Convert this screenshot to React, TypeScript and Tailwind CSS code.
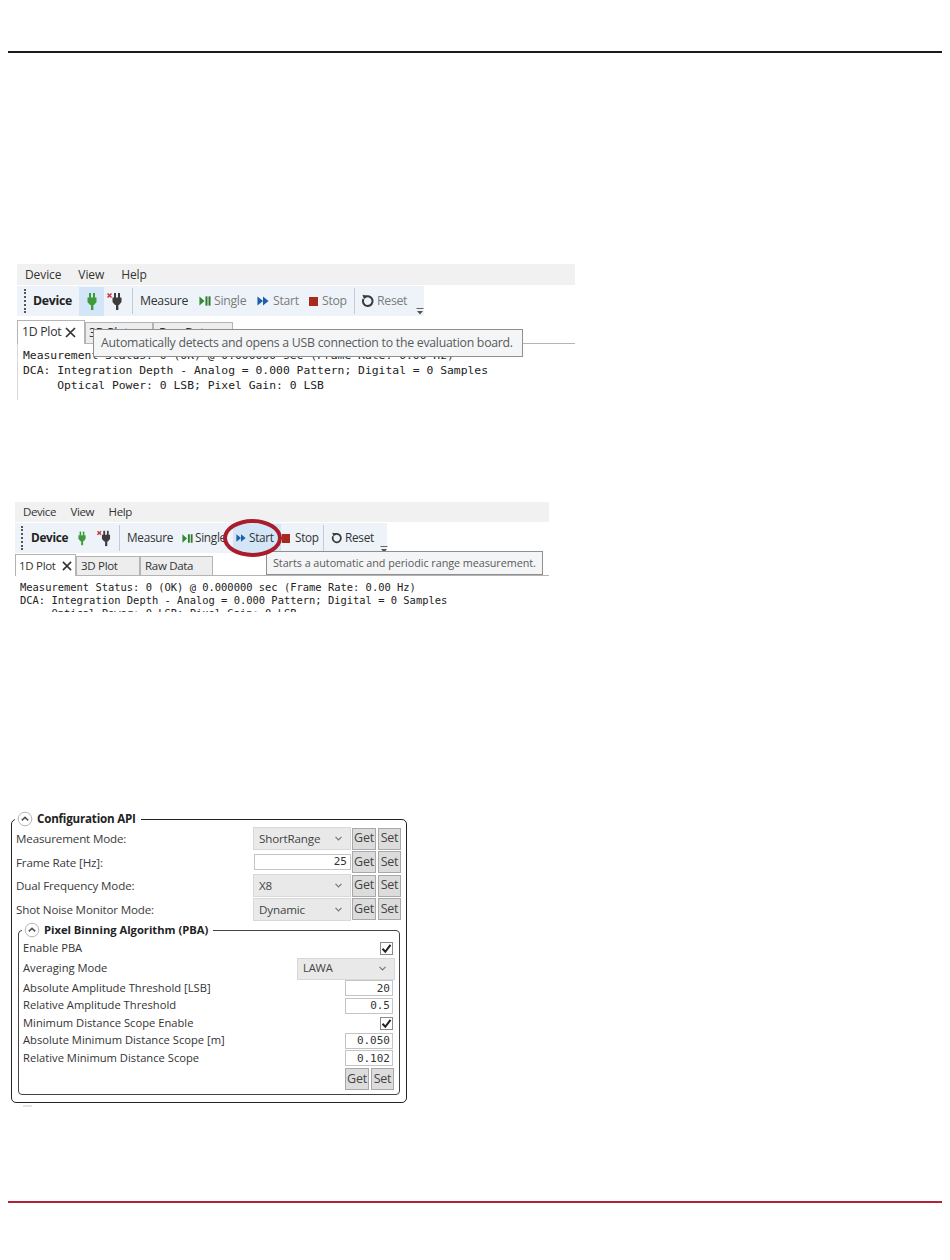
import React from "react";

const ui = "font-['Open_Sans','Noto_Sans',sans-serif]";
const mono = "font-['DejaVu_Sans_Mono',monospace]";

function Plug({ x = false, size = 20 }: { x?: boolean; size?: number }) {
  const c = x ? "#3c3c3c" : "#3f9a3c";
  return (
    <svg width={size} height={size} viewBox="0 0 20 20" className="shrink-0">
      <rect x="7" y="2" width="2" height="5" fill={c} />
      <rect x="11" y="2" width="2" height="5" fill={c} />
      <path d="M5.5 6.5h9v4.5l-2.5 3h-4l-2.5-3z" fill={c} />
      <rect x="9" y="13" width="2.4" height="6" fill={c} />
      {x && <path d="M0.5 2.5l4 4M4.5 2.5l-4 4" stroke="#c8323c" strokeWidth="1.5" />}
    </svg>
  );
}
function PlayBar({ size = 12 }: { size?: number }) {
  return (
    <svg width={size} height={size} viewBox="0 0 13 13" className="shrink-0">
      <path d="M0.5 1.5l5.5 5-5.5 5z" fill="#2e8b2e" />
      <rect x="7" y="1.5" width="2.2" height="10" fill="#2e7d2e" />
      <rect x="10.3" y="1.5" width="2.2" height="10" fill="#2e7d2e" />
    </svg>
  );
}
function Dbl({ size = 12 }: { size?: number }) {
  return (
    <svg width={size} height={size} viewBox="0 0 13 13" className="shrink-0">
      <path d="M0.5 1.5l6 5-6 5z" fill="#1f5fa8" />
      <path d="M6.5 1.5l6 5-6 5z" fill="#1f5fa8" />
    </svg>
  );
}
function Reset({ size = 14 }: { size?: number }) {
  return (
    <svg width={size} height={size} viewBox="0 0 15 15" className="shrink-0">
      <path d="M4 3.6a5.2 5.2 0 1 1-1.4 1.7" fill="none" stroke="#3a3a3a" strokeWidth="2.2" />
      <path d="M1.6 0.8l5 1.2-3.4 3.6z" fill="#3a3a3a" />
    </svg>
  );
}
function Overflow() {
  return (
    <svg width="8" height="7" viewBox="0 0 8 7" className="shrink-0">
      <rect x="0.5" y="0" width="7" height="1" fill="#666" />
      <path d="M1 3h6l-3 3.5z" fill="#555" />
    </svg>
  );
}
function Grip() {
  return <div className="w-[2px] h-[24px] shrink-0 border-l-2 border-dotted border-[#555]" />;
}
function Chev() {
  return (
    <svg width="16" height="16" viewBox="0 0 16 16" className="shrink-0">
      <circle cx="8" cy="8" r="6.8" fill="#fff" stroke="#b5b5b5" strokeWidth="1" />
      <path d="M4.8 9.4L8 6.4l3.2 3" fill="none" stroke="#555" strokeWidth="1.6" />
    </svg>
  );
}
function Check() {
  return (
    <div className="w-[13px] h-[13px] border border-[#8a8a8a] bg-white flex items-center justify-center">
      <svg width="11" height="11" viewBox="0 0 11 11">
        <path d="M1.5 5.8l2.8 3L9.5 1.8" fill="none" stroke="#222" strokeWidth="2" />
      </svg>
    </div>
  );
}
function Select({ label, w, h }: { label: string; w: string; h: string }) {
  return (
    <div className={`${w} ${h} flex items-center justify-between pl-[5px] pr-[8px] bg-[#e9e9e9] border border-[#d8d8d8] text-[#444] tracking-[-0.15px]`}>
      <span>{label}</span>
      <svg width="7" height="5" viewBox="0 0 7 5">
        <path d="M0.5 0.8l3 3 3-3" fill="none" stroke="#777" strokeWidth="1.2" />
      </svg>
    </div>
  );
}
function Btn({ label, w = "w-[24px]" }: { label: string; w?: string }) {
  return (
    <div className={`${w} h-[22px] flex items-center justify-center bg-[#dcdcdc] border border-[#a8a8a8] text-[#444] text-[12.5px] tracking-[-0.2px]`}>
      {label}
    </div>
  );
}
function Num({ v }: { v: string }) {
  return (
    <div className={`w-[48px] h-[16px] flex items-center justify-end pr-[2px] bg-white border border-[#c4c4c4] text-[#333] text-[11px] leading-none ${mono}`}>
      {v}
    </div>
  );
}
function OuterRow({ label, children }: { label: string; children: React.ReactNode }) {
  return (
    <div className="h-[23.5px] flex items-center justify-between pl-[3px] pr-[4px]">
      <span className="text-[#3a3a3a] tracking-[-0.15px]">{label}</span>
      <div className="flex items-center gap-[2px]">{children}</div>
    </div>
  );
}
function InnerRow({ label, children, h = "h-[17.5px]" }: { label: string; children: React.ReactNode; h?: string }) {
  return (
    <div className={`${h} flex items-center justify-between pl-[4px] pr-[6px]`}>
      <span className="text-[#333]">{label}</span>
      {children}
    </div>
  );
}

function Txt({ w, grey, children }: { w: string; grey?: boolean; children: React.ReactNode }) {
  return (
    <span className={`block ${w} shrink-0 whitespace-nowrap ${grey ? "text-[#7c7c7c]" : "text-[#333]"}`}>{children}</span>
  );
}

export default function App() {
  return (
    <div className={`w-[950px] h-[1260px] bg-white overflow-hidden flex flex-col ${ui}`}>
      <div className="mt-[51px] mx-[8px] h-[2px] bg-[#1a1a1a] shrink-0" />

      {/* first capture */}
      <div className="relative mt-[211px] ml-[17px] w-[558px] h-[136px] shrink-0 text-[12.3px] tracking-[-0.3px] text-[#333]">
        <div className="h-[21px] bg-[#f1f1f1] flex items-center gap-[17px] pl-[8px] text-[12px] tracking-[-0.1px]">
          <span>Device</span><span>View</span><span>Help</span>
        </div>
        <div className="mt-[1px] w-[407px] h-[30px] bg-[#eef3fa] flex items-center">
          <div className="ml-[7px]"><Grip /></div>
          <span className="ml-[7px] w-[39px] shrink-0 font-bold text-[#222]">Device</span>
          <div className="ml-[7px] w-[25px] h-[29px] shrink-0 bg-[#d3e6f7] flex items-center justify-center"><Plug /></div>
          <div className="ml-[3px]"><Plug x /></div>
          <div className="ml-[5px] w-px h-[26px] shrink-0 bg-[#c4cbd2]" />
          <div className="ml-[7px]"><Txt w="w-[47px]">Measure</Txt></div>
          <div className="ml-[12px]"><PlayBar /></div>
          <div className="ml-[3px]"><Txt w="w-[33px]" grey>Single</Txt></div>
          <div className="ml-[10px]"><Dbl /></div>
          <div className="ml-[4px]"><Txt w="w-[25px]" grey>Start</Txt></div>
          <div className="ml-[11px] w-[9px] h-[9px] shrink-0 bg-[#a82a1e]" />
          <div className="ml-[4px]"><Txt w="w-[25px]" grey>Stop</Txt></div>
          <div className="ml-[7px] w-px h-[26px] shrink-0 bg-[#c4cbd2]" />
          <div className="ml-[6px]"><Reset /></div>
          <div className="ml-[2px]"><Txt w="w-[30px]" grey>Reset</Txt></div>
          <div className="ml-[9px] self-end mb-[1px]"><Overflow /></div>
        </div>
        <div className="mt-[4px] h-[24px] flex items-end border-b border-[#b4b4b4]">
          <div className="w-[68px] h-[24px] -mb-px bg-white border border-[#b4b4b4] border-b-0 flex items-center pl-[4px] gap-[4px] z-10">
            <span>1D Plot</span>
            <svg width="11" height="11" viewBox="0 0 11 11"><path d="M1 1l9 9M10 1l-9 9" stroke="#333" strokeWidth="1.7" /></svg>
          </div>
          <div className="w-[68px] h-[21px] bg-[#ededed] border border-[#b4b4b4] border-b-0 pl-[3px] flex items-center">3D Plot</div>
          <div className="w-[80px] h-[21px] bg-[#ededed] border border-[#b4b4b4] border-b-0 pl-[5px] flex items-center">Raw Data</div>
        </div>
        <div className={`h-[56px] border-l border-[#d8d8d8] pl-[5px] pt-[4px] text-[11.37px] tracking-normal leading-[15px] text-[#222] whitespace-pre ${mono}`}>
          <div>Measurement Status: 0 (OK) @ 0.000000 sec (Frame Rate: 0.00 Hz)</div>
          <div>DCA: Integration Depth - Analog = 0.000 Pattern; Digital = 0 Samples</div>
          <div>     Optical Power: 0 LSB; Pixel Gain: 0 LSB</div>
        </div>
        <div className="absolute left-[76px] top-[65px] w-[430px] h-[28px] bg-[#f4f5f6] border border-[#8f8f8f] flex items-center pl-[7px] text-[12.3px] tracking-[-0.26px] text-[#5a5a5a] whitespace-nowrap">
          Automatically detects and opens a USB connection to the evaluation board.
        </div>
      </div>

      {/* second capture */}
      <div className="relative mt-[102px] ml-[15px] w-[534px] h-[110px] shrink-0 text-[11.8px] tracking-[-0.3px] text-[#333]">
        <div className="h-[20px] bg-[#f1f1f1] flex items-center gap-[14.5px] pl-[8px] text-[11.5px] tracking-[-0.4px]">
          <span>Device</span><span>View</span><span>Help</span>
        </div>
        <div className="mt-[1px] w-[372px] h-[30px] bg-[#eef3fa] flex items-center">
          <div className="ml-[6px]"><Grip /></div>
          <span className="ml-[8px] w-[35px] shrink-0 font-bold text-[#222]">Device</span>
          <div className="ml-[8px]"><Plug size={16} /></div>
          <div className="ml-[7px]"><Plug x size={18} /></div>
          <div className="ml-[4px] w-px h-[26px] shrink-0 bg-[#c4cbd2]" />
          <div className="ml-[7px]"><Txt w="w-[43px]">Measure</Txt></div>
          <div className="ml-[12px]"><PlayBar size={11} /></div>
          <div className="ml-[2px]"><Txt w="w-[28px]">Single</Txt></div>
          <div className="ml-[10px] w-[48px] h-[29px] shrink-0 bg-[#d3e6f7] flex items-center pl-[3px]">
            <Dbl size={10} />
            <div className="ml-[3px]"><Txt w="w-[23px]">Start</Txt></div>
          </div>
          <div className="ml-[1px] w-[8px] h-[9px] shrink-0 bg-[#a82a1e]" />
          <div className="ml-[5px]"><Txt w="w-[23px]">Stop</Txt></div>
          <div className="ml-[5px] w-px h-[26px] shrink-0 bg-[#c4cbd2]" />
          <div className="ml-[7px]"><Reset size={12} /></div>
          <div className="ml-[2px]"><Txt w="w-[27px]">Reset</Txt></div>
          <div className="ml-[8px] self-end"><Overflow /></div>
        </div>
        <div className="h-[23px] flex items-end border-b border-[#b4b4b4] text-[11.5px]">
          <div className="w-[61px] h-[22px] -mb-px bg-white border border-[#b4b4b4] border-b-0 flex items-center pl-[3px] gap-[6px] z-10">
            <span>1D Plot</span>
            <svg width="10" height="10" viewBox="0 0 11 11"><path d="M1 1l9 9M10 1l-9 9" stroke="#333" strokeWidth="1.7" /></svg>
          </div>
          <div className="w-[64px] h-[19px] bg-[#ededed] border border-[#b4b4b4] border-b-0 pl-[4px] flex items-center">3D Plot</div>
          <div className="w-[73px] h-[19px] bg-[#ededed] border border-[#b4b4b4] border-b-0 pl-[4px] flex items-center">Raw Data</div>
        </div>
        <div className={`h-[36px] overflow-hidden pl-[5px] pt-[5px] text-[10.45px] tracking-normal leading-[13px] text-[#222] whitespace-pre ${mono}`}>
          <div>Measurement Status: 0 (OK) @ 0.000000 sec (Frame Rate: 0.00 Hz)</div>
          <div>DCA: Integration Depth - Analog = 0.000 Pattern; Digital = 0 Samples</div>
          <div>     Optical Power: 0 LSB; Pixel Gain: 0 LSB</div>
        </div>
        <div className="absolute left-[251px] top-[49px] w-[277px] h-[24px] bg-[#f4f5f6] border border-[#8f8f8f] flex items-center pl-[6px] text-[10.8px] tracking-[-0.05px] text-[#5a5a5a] whitespace-nowrap">
          Starts a automatic and periodic range measurement.
        </div>
        <div className="absolute left-[208px] top-[17px] w-[59px] h-[38px] rounded-[50%] border-[4px] border-[#a81c2b]" />
      </div>

      {/* configuration */}
      <fieldset className="mt-[199px] ml-[11px] w-[396px] h-[292px] shrink-0 border-[1.5px] border-[#222] rounded-[5px] px-px text-[11.6px]">
        <legend className="ml-[2px] px-[2px] flex items-center gap-[4px] h-[16px]">
          <Chev />
          <span className="font-bold text-[#222] pr-[3px] tracking-[-0.2px]">Configuration API</span>
        </legend>
        <div>
          <OuterRow label="Measurement Mode:">
            <div className="-mr-px"><Select label="ShortRange" w="w-[98px]" h="h-[23px]" /></div>
            <Btn label="Get" />
            <Btn label="Set" w="w-[23px]" />
          </OuterRow>
          <OuterRow label="Frame Rate [Hz]:">
            <div className={`-mr-px w-[97px] h-[16px] flex items-center justify-end pr-[3px] bg-white border border-[#c4c4c4] text-[11px] text-[#333] ${mono}`}>25</div>
            <Btn label="Get" />
            <Btn label="Set" w="w-[23px]" />
          </OuterRow>
          <OuterRow label="Dual Frequency Mode:">
            <div className="-mr-px"><Select label="X8" w="w-[98px]" h="h-[23px]" /></div>
            <Btn label="Get" />
            <Btn label="Set" w="w-[23px]" />
          </OuterRow>
          <OuterRow label="Shot Noise Monitor Mode:">
            <div className="-mr-px"><Select label="Dynamic" w="w-[98px]" h="h-[23px]" /></div>
            <Btn label="Get" />
            <Btn label="Set" w="w-[23px]" />
          </OuterRow>
        </div>
        <fieldset className="mt-[1px] ml-[5px] w-[382px] h-[173px] border-[1.5px] border-[#444] rounded-[4px] text-[11.2px]">
          <legend className="ml-[3px] px-[2px] flex items-center gap-[4px] h-[16px]">
            <Chev />
            <span className="font-bold text-[#222] pr-[3px]">Pixel Binning Algorithm (PBA)</span>
          </legend>
          <div className="mt-[2px]">
            <InnerRow label="Enable PBA"><Check /></InnerRow>
            <InnerRow label="Averaging Mode" h="h-[22px]">
              <div className="-mr-[2px]"><Select label="LAWA" w="w-[98px]" h="h-[22px]" /></div>
            </InnerRow>
            <InnerRow label="Absolute Amplitude Threshold [LSB]"><Num v="20" /></InnerRow>
            <InnerRow label="Relative Amplitude Threshold"><Num v="0.5" /></InnerRow>
            <InnerRow label="Minimum Distance Scope Enable"><Check /></InnerRow>
            <InnerRow label="Absolute Minimum Distance Scope [m]"><Num v="0.050" /></InnerRow>
            <InnerRow label="Relative Minimum Distance Scope"><Num v="0.102" /></InnerRow>
            <div className="mt-[1px] flex justify-end gap-[2px] pr-[5px]">
              <Btn label="Get" />
              <Btn label="Set" w="w-[23px]" />
            </div>
          </div>
        </fieldset>
      </fieldset>
      <div className="mt-[2px] ml-[23px] w-[9px] h-[2px] bg-[#e4e4e4] shrink-0" />

      <div className="mt-[94px] mx-[8px] h-[2px] bg-[#b5203a] shrink-0" />
    </div>
  );
}
